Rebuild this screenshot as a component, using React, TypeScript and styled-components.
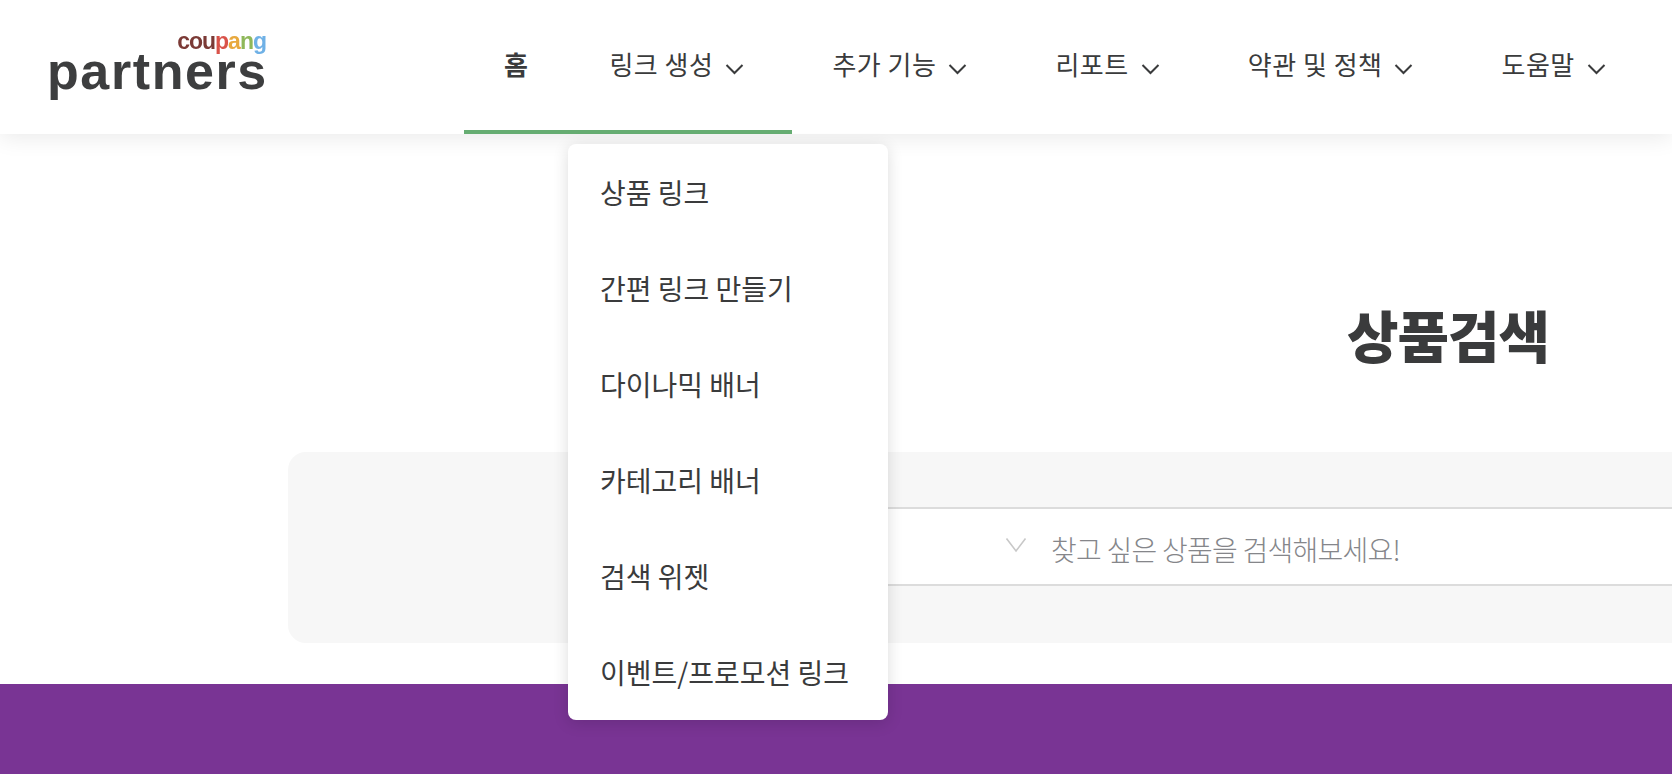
import React from "react";
import styled, { createGlobalStyle } from "styled-components";

const Global = createGlobalStyle`
  html, body { margin: 0; padding: 0; background: #fff; overflow: hidden; }
  body { font-family: "Noto Sans CJK KR", "Noto Sans", sans-serif; color: #3a3b3c; }
  * { box-sizing: border-box; }
`;

const Page = styled.div`
  position: relative;
  width: 1672px;
  height: 774px;
  overflow: hidden;
`;

const Header = styled.header`
  position: relative;
  z-index: 2;
  display: flex;
  align-items: flex-start;
  height: 134px;
  background: #fff;
  box-shadow: 0 3px 22px rgba(0, 0, 0, 0.09);
`;

const Logo = styled.div`
  position: relative;
  width: 504px;
  flex: none;
  padding: 31px 0 0 47px;
  filter: blur(0.7px);
`;

const LogoTop = styled.div`
  width: 219px;
  height: 21px;
  text-align: right;
  font: 700 23px/21px "Liberation Sans", sans-serif;
  letter-spacing: -1px;
  color: #7b3a36;
`;

const Letter = styled.span<{ $c: string }>`
  color: ${(p) => p.$c};
`;

const LogoMain = styled.div`
  margin-top: 1px;
  font: 700 52px/36px "Liberation Sans", sans-serif;
  letter-spacing: 1.6px;
  color: #3d3e3f;
`;

const Nav = styled.nav`
  display: flex;
  gap: 88px;
  height: 130px;
`;

const NavItem = styled.div<{ $active?: boolean }>`
  display: flex;
  align-items: center;
  gap: 12px;
  height: 46px;
  margin-top: 41px;
  margin-right: ${(p) => (p.$active ? "-7px" : "0")};
  font-size: 26px;
  line-height: 46px;
  font-weight: ${(p) => (p.$active ? 700 : 400)};
  letter-spacing: 0.5px;
  white-space: nowrap;
`;

const ActiveBar = styled.div`
  position: absolute;
  left: 464px;
  top: 130px;
  width: 328px;
  height: 4px;
  background: #66ad72;
`;

const Chevron = styled.svg`
  flex: none;
  width: 19px;
  height: 12px;
  margin-top: 9px;
`;

const Menu = styled.ul`
  position: absolute;
  z-index: 3;
  left: 568px;
  top: 144px;
  width: 320px;
  height: 576px;
  margin: 0;
  padding: 0;
  list-style: none;
  background: #fff;
  border-radius: 8px;
  box-shadow: 0 3px 16px rgba(0, 0, 0, 0.14);
`;

const MenuItem = styled.li`
  display: flex;
  align-items: center;
  height: 96px;
  padding-left: 32px;
  font-size: 28px;
  white-space: nowrap;
`;

const Main = styled.main`
  width: 2896px;
`;

const Title = styled.h1`
  margin: 0;
  padding-top: 165px;
  height: 318px;
  text-align: center;
  font-size: 56px;
  line-height: 70px;
  font-weight: 900;
  letter-spacing: -1px;
`;

const SearchPanel = styled.section`
  display: flex;
  align-items: center;
  height: 191px;
  margin: 0 288px;
  padding: 0 60px 0 580px;
  background: #f7f7f7;
  border-radius: 18px;
`;

const SearchBox = styled.div`
  flex: 1;
  display: flex;
  align-items: center;
  gap: 24px;
  height: 79px;
  margin-top: -2px;
  padding: 4px 0 0 137px;
  background: #fff;
  border-top: 2px solid #dcdcdc;
  border-bottom: 2px solid #dcdcdc;
`;

const SearchChevron = styled.svg`
  flex: none;
  width: 22px;
  height: 16px;
  margin-top: -7px;
`;

const Placeholder = styled.span`
  font-size: 28px;
  line-height: 40px;
  font-weight: 300;
  letter-spacing: -0.75px;
  color: #85868a;
  white-space: nowrap;
`;

const Band = styled.section`
  height: 90px;
  margin-top: 41px;
  background: #793494;
`;

const navItems = ["링크 생성", "추가 기능", "리포트", "약관 및 정책", "도움말"];
const menuItems = [
  "상품 링크",
  "간편 링크 만들기",
  "다이나믹 배너",
  "카테고리 배너",
  "검색 위젯",
  "이벤트/프로모션 링크",
];

export default function App() {
  return (
    <Page>
      <Global />
      <Header>
        <Logo>
          <LogoTop>
            cou
            <Letter $c="#d9534a">p</Letter>
            <Letter $c="#e8a93e">a</Letter>
            <Letter $c="#8fb85a">n</Letter>
            <Letter $c="#6fb1e6">g</Letter>
          </LogoTop>
          <LogoMain>partners</LogoMain>
        </Logo>
        <Nav>
          <NavItem $active>홈</NavItem>
          {navItems.map((label) => (
            <NavItem key={label}>
              {label}
              <Chevron viewBox="0 0 19 12" aria-hidden="true">
                <polyline points="1.5,2 9.5,10 17.5,2" fill="none" stroke="#3a3b3c" strokeWidth="2" />
              </Chevron>
            </NavItem>
          ))}
        </Nav>
        <ActiveBar />
      </Header>
      <Menu>
        {menuItems.map((label) => (
          <MenuItem key={label}>{label}</MenuItem>
        ))}
      </Menu>
      <Main>
        <Title>상품검색</Title>
        <SearchPanel>
          <SearchBox>
            <SearchChevron viewBox="0 0 22 16" aria-hidden="true">
              <polyline points="1.5,1.5 11,14 20.5,1.5" fill="none" stroke="#c8c8c8" strokeWidth="1.6" />
            </SearchChevron>
            <Placeholder>찾고 싶은 상품을 검색해보세요!</Placeholder>
          </SearchBox>
        </SearchPanel>
        <Band />
      </Main>
    </Page>
  );
}
